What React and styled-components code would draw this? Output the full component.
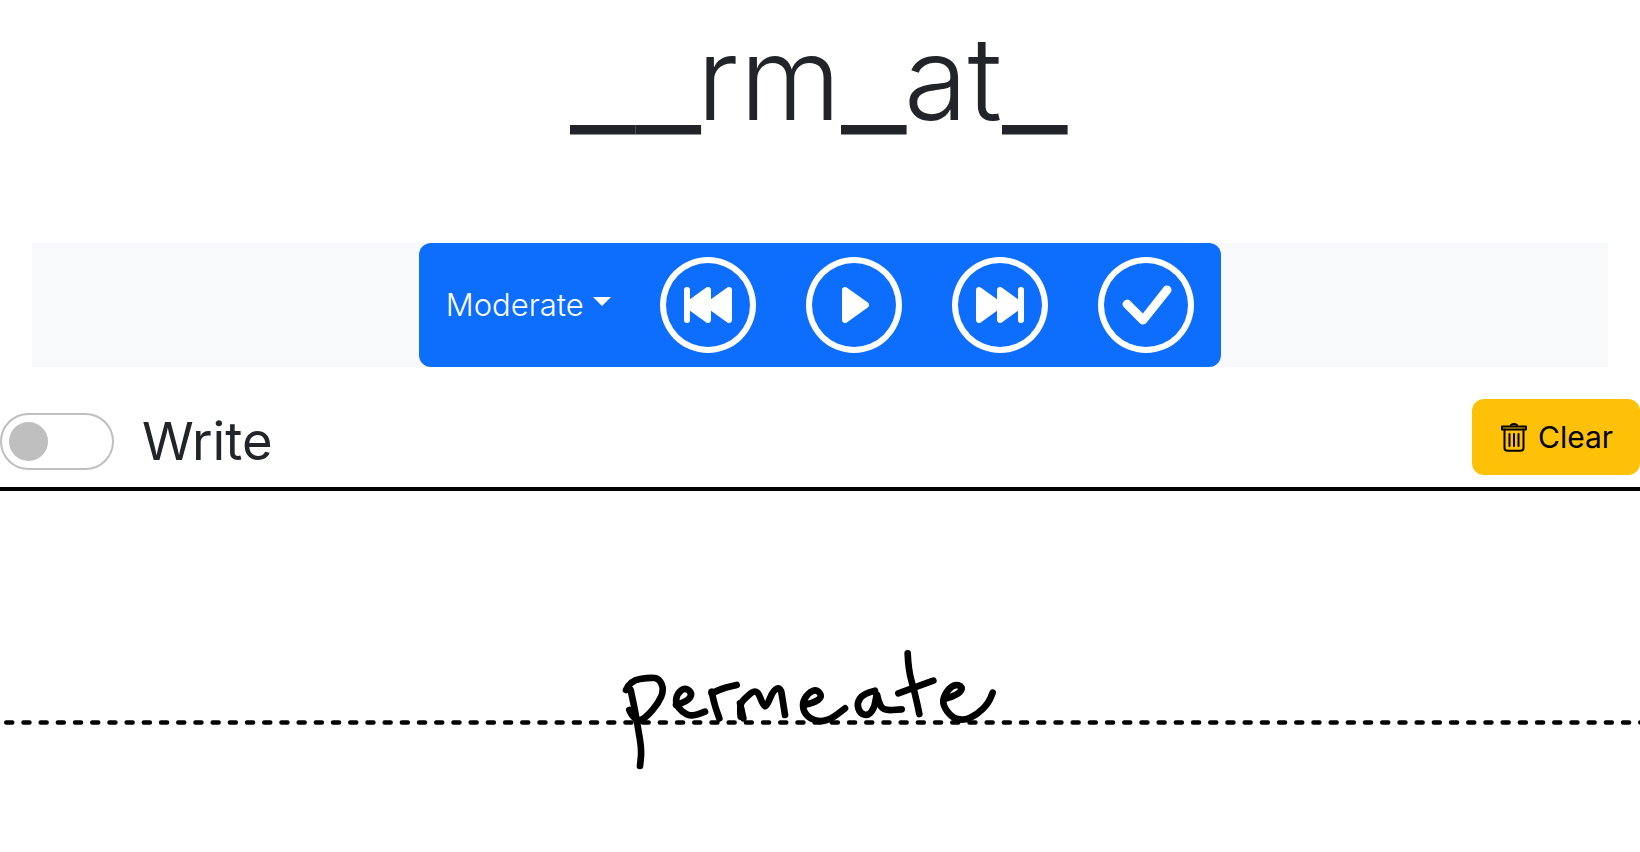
import React from 'react'
import styled, { createGlobalStyle } from 'styled-components'
import { BsSkipBackwardCircle, BsPlayCircle, BsSkipForwardCircle, BsCheckCircle } from 'react-icons/bs'

const GlobalStyle = createGlobalStyle`
  html, body {
    margin: 0;
    padding: 0;
    background: #fff;
    color: #212529;
    font-family: Inter, "Liberation Sans", sans-serif;
  }
`

// freehand strokes of the pen on the writing area, not typeset text
const INK = [
  [[78, 150], [90, 122], [150, 112], [178, 116], [192, 150], [175, 190], [140, 230], [115, 245], [95, 225], [88, 210]],
  [[92, 150], [105, 210], [115, 270], [125, 330], [120, 378]],
  [[228, 195], [262, 185], [278, 160], [255, 142], [232, 160], [226, 190], [245, 215], [275, 230], [315, 215]],
  [[335, 155], [342, 190], [358, 235]],
  [[335, 160], [365, 145], [410, 135]],
  [[420, 190], [430, 235]],
  [[422, 230], [418, 195], [435, 175], [470, 145], [490, 198], [500, 200], [520, 150], [542, 142], [548, 180], [555, 225]],
  [[610, 195], [640, 190], [668, 170], [650, 148], [625, 158], [606, 190], [615, 225], [650, 245], [690, 240], [735, 205]],
  [[825, 152], [790, 160], [770, 190], [780, 220], [805, 228], [825, 200], [830, 155], [835, 185], [850, 212], [905, 208]],
  [[923, 40], [925, 90], [945, 160], [958, 222]],
  [[895, 160], [950, 140], [1000, 122]],
  [[1040, 175], [1075, 165], [1090, 140], [1060, 132], [1032, 165], [1028, 195], [1055, 232], [1090, 242], [1130, 225], [1165, 190], [1178, 158]],
]

// round the pen stroke through the midpoints of its samples
const smooth = (pts) => {
  let d = `M${pts[0][0]} ${pts[0][1]}`
  for (let i = 1; i < pts.length - 1; i++) {
    const mx = (pts[i][0] + pts[i + 1][0]) / 2
    const my = (pts[i][1] + pts[i + 1][1]) / 2
    d += ` Q${pts[i][0]} ${pts[i][1]} ${mx} ${my}`
  }
  const last = pts[pts.length - 1]
  return `${d} L${last[0]} ${last[1]}`
}

const App = () => {
  return (
    <>
      <GlobalStyle />
      <Page>
        <Title>
          <Blank $count={2} $pull={3}>__</Blank>rm<Blank $count={1} $pull={2}>_</Blank>at<Blank $count={1}>_</Blank>
        </Title>
        <Navbar>
          <Controls>
            <Level type='button'>Moderate</Level>
            <RoundButton type='button'><BsSkipBackwardCircle /></RoundButton>
            <RoundButton type='button'><BsPlayCircle /></RoundButton>
            <RoundButton type='button'><BsSkipForwardCircle /></RoundButton>
            <RoundButton type='button'><BsCheckCircle /></RoundButton>
          </Controls>
        </Navbar>
        <ToolRow>
          <ModeSwitch>
            <Toggle />
            <ModeLabel>Write</ModeLabel>
          </ModeSwitch>
          <ClearButton type='button'>
            <svg viewBox='0 0 26 30' width='26' height='30' fill='none' stroke='#000' strokeWidth='2' strokeLinecap='round' strokeLinejoin='round'>
              <path d='M1 4.5 H25 V7.5 H1 Z' />
              <path d='M10 3 Q13 .8 16 3' />
              <path d='M3.5 7.5 V26 Q3.5 28.8 6.5 28.8 H19.5 Q22.5 28.8 22.5 26 V7.5' />
              <path d='M8.5 12 V24 M13 12 V24 M17.5 12 V24' />
            </svg>
            Clear
          </ClearButton>
        </ToolRow>
        <WritingArea>
          <Baseline>
            <line x1='6.25' y1='2.5' x2='1700' y2='2.5' />
          </Baseline>
          <Ink viewBox='0 0 1260 420'>
            {INK.map((pts) => <path key={pts.join()} d={smooth(pts)} />)}
          </Ink>
        </WritingArea>
      </Page>
    </>
  )
}

const Page = styled.div`
  display: flex;
  flex-direction: column;
  height: 852px;
  overflow: hidden;
`

const Title = styled.h1`
  margin: 0;
  height: 242.5px;
  padding-right: 3px;
  text-align: center;
  font-size: 116px;
  line-height: 156px;
  font-weight: 330;
`

// the blanks run wider than Inter's underscore, so they are stretched to fit
const Blank = styled.span`
  display: inline-block;
  width: ${(p) => p.$count * 65}px;
  margin-right: ${(p) => -(p.$pull || 0)}px;
  font-weight: 400;
  text-align: left;
  transform: translateY(5px) scaleX(1.24);
  transform-origin: left;
`

const Navbar = styled.nav`
  display: flex;
  justify-content: center;
  margin: 0 32px 0 31.5px;
  background: #f8f9fa;
`

const Controls = styled.div`
  display: flex;
  align-items: center;
  gap: 50px;
  width: 802px;
  height: 124px;
  box-sizing: border-box;
  padding-left: 27px;
  background: #0d6efd;
  border-radius: 12px;
`

const Level = styled.button`
  display: flex;
  align-items: center;
  width: 164px;
  padding: 0;
  border: 0;
  background: none;
  color: #fff;
  font: 300 31px Inter, sans-serif;
  &::after {
    content: '';
    margin-left: 9px;
    margin-top: -6px;
    border-top: 9px solid #fff;
    border-left: 9px solid transparent;
    border-right: 9px solid transparent;
  }
`

const RoundButton = styled.button`
  display: flex;
  padding: 0;
  border: 0;
  background: none;
  color: #fff;
  font-size: 96px;
`

const ToolRow = styled.div`
  display: flex;
  justify-content: space-between;
  padding: 32.5px 0 12px;
  border-bottom: 4px solid #000;
`

const ModeSwitch = styled.div`
  display: flex;
  align-items: center;
  gap: 28px;
  margin-top: 8.5px;
`

const Toggle = styled.span`
  width: 114px;
  height: 57px;
  box-sizing: border-box;
  border: 2px solid #bfbfbf;
  border-radius: 29px;
  padding: 7px;
  &::before {
    content: '';
    display: block;
    width: 39px;
    height: 39px;
    border-radius: 50%;
    background: #bfbfbf;
  }
`

const ModeLabel = styled.span`
  font-size: 52.5px;
  line-height: 56px;
`

const ClearButton = styled.button`
  display: flex;
  align-items: center;
  gap: 11px;
  width: 168px;
  height: 76px;
  padding: 0 0 0 29px;
  border: 0;
  border-radius: 12px;
  background: #ffc107;
  color: #000;
  font: 400 30px Inter, sans-serif;
`

const WritingArea = styled.div`
  position: relative;
  flex: 1;
`

const Baseline = styled.svg`
  position: absolute;
  left: 0;
  top: 229px;
  width: 100%;
  height: 5px;
  stroke: #000;
  stroke-width: 4.5;
  stroke-linecap: round;
  stroke-dasharray: 6 11.2;
`

const Ink = styled.svg`
  position: absolute;
  left: 600px;
  top: 149px;
  width: 420px;
  height: 140px;
  fill: none;
  stroke: #000;
  stroke-width: 20;
  stroke-linecap: round;
  stroke-linejoin: round;
`

export default App
